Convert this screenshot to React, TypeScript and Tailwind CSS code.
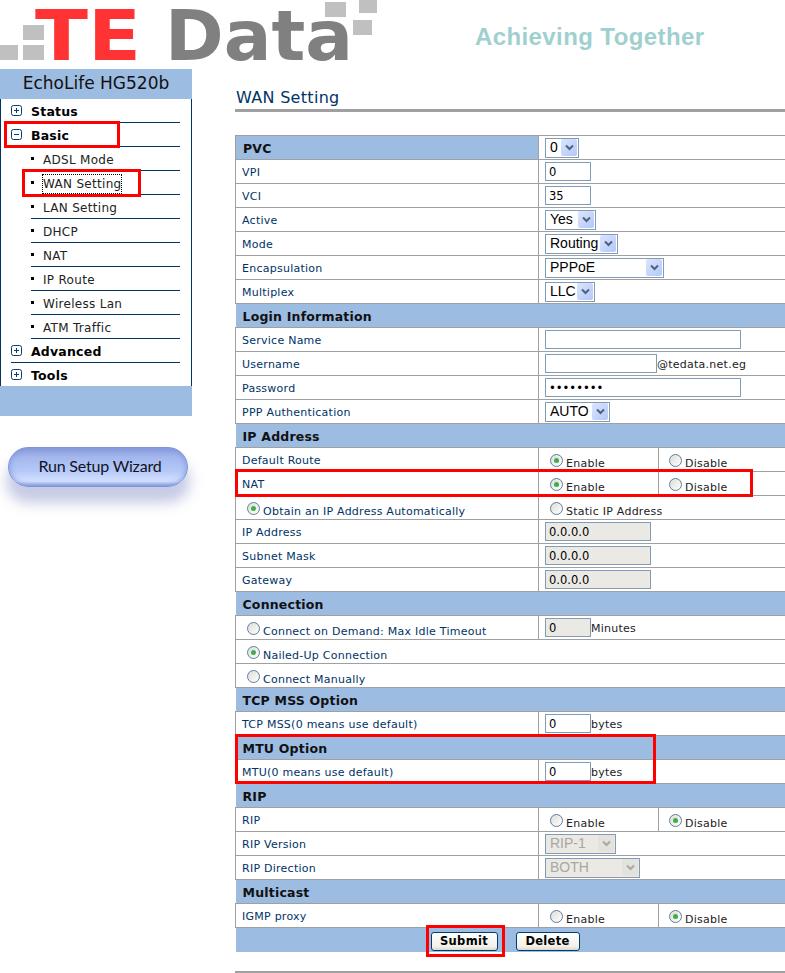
import type { ReactNode } from "react";

const SANS = "font-['DejaVu_Sans',Verdana,sans-serif]";
const ARIAL = "font-['Liberation_Sans',Arial,sans-serif]";

function TreeIcon({ open }: { open?: boolean }) {
  return (
    <svg width="11" height="11" viewBox="0 0 11 11" className="shrink-0">
      <rect x="0.5" y="0.5" width="10" height="10" rx="2" fill="#fff" stroke="#0b3a6e" />
      <path d="M3 5.5h5" stroke="#0b3a6e" />
      {!open && <path d="M5.5 3v5" stroke="#0b3a6e" />}
    </svg>
  );
}

function TopItem({ label, open, last }: { label: string; open?: boolean; last?: boolean }) {
  return (
    <div
      className={`flex items-center gap-[9px] text-[12.5px] font-bold tracking-[0.2px] text-black ${
        last ? "h-[23px]" : "h-6 border-b border-[#003366]"
      }`}
    >
      <TreeIcon open={open} />
      <span className="mt-1">{label}</span>
    </div>
  );
}

function SubItem({ label, focused }: { label: string; focused?: boolean }) {
  return (
    <div className="ml-5 flex h-6 items-center border-b border-[#003366] text-[12px] tracking-[0.3px] text-[#222]">
      <span className="mr-[9px] h-[3px] w-[3px] bg-black" />
      <span className={`mt-[2px] ${focused ? "outline-1 outline-dotted outline-black" : ""}`}>{label}</span>
    </div>
  );
}

function Sidebar() {
  return (
    <aside className={`w-[192px] shrink-0 ${SANS}`}>
      <div className="flex h-[30px] items-center justify-center bg-[#9dbce1] text-[17px] text-[#111]">
        EchoLife HG520b
      </div>
      <div className="border-x border-[#003366] pl-[10px] pr-[11px]">
        <TopItem label="Status" />
        <TopItem label="Basic" open />
        <SubItem label="ADSL Mode" />
        <SubItem label="WAN Setting" focused />
        <SubItem label="LAN Setting" />
        <SubItem label="DHCP" />
        <SubItem label="NAT" />
        <SubItem label="IP Route" />
        <SubItem label="Wireless Lan" />
        <SubItem label="ATM Traffic" />
        <TopItem label="Advanced" />
        <TopItem label="Tools" last />
      </div>
      <div className="h-[30px] bg-[#9dbce1]" />
      <div className="ml-2 mt-[31px] flex h-[40px] w-[180px] items-center justify-center rounded-full border border-[#8095d8] bg-[linear-gradient(#8a9ddb_0%,#a5b8ee_25%,#b4c8f8_60%,#d6e2ff_88%,#8ea4e6_100%)] pb-[2px] pl-[4px] font-['Lato',sans-serif] text-[16px] tracking-[-0.2px] text-[#10131f] shadow-[inset_0_0_6px_#7f95dd,0_14px_13px_2px_rgba(130,140,195,0.45)]">
        Run Setup Wizard
      </div>
    </aside>
  );
}

function Chevron({ disabled }: { disabled?: boolean }) {
  return (
    <span
      className={`flex h-[17px] w-4 shrink-0 items-center justify-center rounded-[2px] ${
        disabled ? "bg-[#e4e2dc]" : "bg-[linear-gradient(135deg,#dbe5fd,#b3c8f7)]"
      }`}
    >
      <svg width="9" height="7" viewBox="0 0 9 7">
        <path d="M1 1.5l3.5 3.5L8 1.5" fill="none" stroke={disabled ? "#aaa89f" : "#4d6185"} strokeWidth="2" />
      </svg>
    </span>
  );
}

function Dropdown({ value, className, disabled }: { value: string; className: string; disabled?: boolean }) {
  return (
    <div
      className={`flex h-5 items-center justify-between border border-[#7f9db9] pl-[4px] pr-[1px] ${ARIAL} text-[14px] tracking-normal ${
        disabled ? "bg-[#ebe9e4] text-[#a9a79f]" : "bg-white text-black"
      } ${className}`}
    >
      <span>{value}</span>
      <Chevron disabled={disabled} />
    </div>
  );
}

function Field({ value = "", className, disabled, type = "text" }: { value?: string; className: string; disabled?: boolean; type?: string }) {
  return (
    <input
      readOnly
      type={type}
      value={value}
      className={`block h-[19px] border border-[#7f9db9] px-[3px] ${SANS} text-[11.5px] tracking-normal text-black outline-none ${
        disabled ? "bg-[#ebe9e4]" : "bg-white"
      } ${className}`}
    />
  );
}

function Suffix({ children }: { children: ReactNode }) {
  return <span className="pt-1">{children}</span>;
}

function Radio({ checked, label }: { checked?: boolean; label: string }) {
  return (
    <span className="flex items-start gap-[3px]">
      <span className="-mt-[3px] flex h-[13px] w-[13px] shrink-0 items-center justify-center rounded-full border border-[#5f7f9f] bg-[linear-gradient(135deg,#dcdcd6,#ffffff)]">
        {checked && <span className="h-[5px] w-[5px] rounded-full bg-[#3fae49]" />}
      </span>
      <span className="leading-[14px]">{label}</span>
    </span>
  );
}

function SectionRow({ title, second }: { title: string; second?: ReactNode }) {
  if (second) {
    return (
      <tr className="h-6">
        <td className="border border-[#a0a0a0] bg-[#9dbce1] p-0 pl-[7px] pt-1 text-[12.5px] font-bold tracking-[0.2px] text-[#111]">{title}</td>
        <td colSpan={2} className="border border-[#a0a0a0] p-0 pl-[6px]">{second}</td>
      </tr>
    );
  }
  return (
    <tr className="h-6">
      <td colSpan={3} className="bg-[#9dbce1] p-0 pl-[7px] pt-1 text-[12.5px] font-bold tracking-[0.2px] text-[#111]">{title}</td>
    </tr>
  );
}

function FieldRow({ label, children }: { label: ReactNode; children?: ReactNode }) {
  return (
    <tr className="h-6">
      <td className="border border-[#a0a0a0] p-0 pl-[6px] pt-1 text-[#003366]">{label}</td>
      <td colSpan={2} className="border border-[#a0a0a0] p-0 pl-[6px]">
        <div className="flex items-center text-[#222]">{children}</div>
      </td>
    </tr>
  );
}

function RadioRow({ label, first }: { label: string; first: boolean }) {
  return (
    <tr className="h-6">
      <td className="border border-[#a0a0a0] p-0 pl-[6px] pt-1 text-[#003366]">{label}</td>
      <td className="border border-[#a0a0a0] p-0 pl-[11px] pt-2 text-[#222]"><Radio checked={first} label="Enable" /></td>
      <td className="border border-[#a0a0a0] p-0 pl-[10px] pt-2 text-[#222]"><Radio checked={!first} label="Disable" /></td>
    </tr>
  );
}

function WideRadioRow({ label, checked }: { label: string; checked?: boolean }) {
  return (
    <tr className="h-6">
      <td colSpan={3} className="border border-[#a0a0a0] p-0 pl-[11px] pt-2 text-[#003366]">
        <Radio checked={checked} label={label} />
      </td>
    </tr>
  );
}

function ActionButton({ children, className }: { children: ReactNode; className: string }) {
  return (
    <button
      type="button"
      className={`h-[19px] rounded-[3px] border border-[#003c74] bg-[linear-gradient(#ffffff,#f2f0e8_80%,#dcd8c8)] text-[11.5px] font-bold tracking-[0.3px] text-black ${className}`}
    >
      {children}
    </button>
  );
}

function SettingsTable() {
  return (
    <table className="w-[550px] table-fixed border-collapse text-[11px] tracking-[0.25px]">
      <colgroup>
        <col className="w-[303px]" />
        <col className="w-[120px]" />
        <col className="w-[127px]" />
      </colgroup>
      <tbody>
        <SectionRow title="PVC" second={<Dropdown value="0" className="w-[34px]" />} />
        <FieldRow label="VPI"><Field value="0" className="w-[46px]" /></FieldRow>
        <FieldRow label="VCI"><Field value="35" className="w-[46px]" /></FieldRow>
        <FieldRow label="Active"><Dropdown value="Yes" className="w-[51px]" /></FieldRow>
        <FieldRow label="Mode"><Dropdown value="Routing" className="w-[73px]" /></FieldRow>
        <FieldRow label="Encapsulation"><Dropdown value="PPPoE" className="w-[119px]" /></FieldRow>
        <FieldRow label="Multiplex"><Dropdown value="LLC" className="w-[50px]" /></FieldRow>
        <SectionRow title="Login Information" />
        <FieldRow label="Service Name"><Field className="w-[196px]" /></FieldRow>
        <FieldRow label="Username"><Field className="w-[112px]" /><Suffix>@tedata.net.eg</Suffix></FieldRow>
        <FieldRow label="Password"><Field type="password" value="12345678" className="w-[196px]" /></FieldRow>
        <FieldRow label="PPP Authentication"><Dropdown value="AUTO" className="w-[65px]" /></FieldRow>
        <SectionRow title="IP Address" />
        <RadioRow label="Default Route" first />
        <RadioRow label="NAT" first />
        <tr className="h-6">
          <td className="border border-[#a0a0a0] p-0 pl-[11px] pt-2 text-[#003366]">
            <Radio checked label="Obtain an IP Address Automatically" />
          </td>
          <td colSpan={2} className="border border-[#a0a0a0] p-0 pl-[11px] pt-2 text-[#222]">
            <Radio label="Static IP Address" />
          </td>
        </tr>
        <FieldRow label="IP Address"><Field disabled value="0.0.0.0" className="w-[106px]" /></FieldRow>
        <FieldRow label="Subnet Mask"><Field disabled value="0.0.0.0" className="w-[106px]" /></FieldRow>
        <FieldRow label="Gateway"><Field disabled value="0.0.0.0" className="w-[106px]" /></FieldRow>
        <SectionRow title="Connection" />
        <tr className="h-6">
          <td className="border border-[#a0a0a0] p-0 pl-[11px] pt-2 text-[#003366]">
            <Radio label="Connect on Demand: Max Idle Timeout" />
          </td>
          <td colSpan={2} className="border border-[#a0a0a0] p-0 pl-[6px]">
            <div className="flex items-center text-[#222]">
              <Field disabled value="0" className="w-[46px]" />
              <Suffix>Minutes</Suffix>
            </div>
          </td>
        </tr>
        <WideRadioRow label="Nailed-Up Connection" checked />
        <WideRadioRow label="Connect Manually" />
        <SectionRow title="TCP MSS Option" />
        <FieldRow label="TCP MSS(0 means use default)"><Field value="0" className="w-[46px]" /><Suffix>bytes</Suffix></FieldRow>
        <SectionRow title="MTU Option" />
        <FieldRow label="MTU(0 means use default)"><Field value="0" className="w-[46px]" /><Suffix>bytes</Suffix></FieldRow>
        <SectionRow title="RIP" />
        <RadioRow label="RIP" first={false} />
        <FieldRow label="RIP Version"><Dropdown disabled value="RIP-1" className="w-[71px]" /></FieldRow>
        <FieldRow label="RIP Direction"><Dropdown disabled value="BOTH" className="w-[95px]" /></FieldRow>
        <SectionRow title="Multicast" />
        <RadioRow label="IGMP proxy" first={false} />
        <tr className="h-6">
          <td colSpan={3} className="bg-[#9dbce1] p-0 pt-[4px] align-top">
            <div className="flex items-center gap-[18px] pl-[195px]">
              <ActionButton className="w-[67px]">Submit</ActionButton>
              <ActionButton className="w-[64px]">Delete</ActionButton>
            </div>
          </td>
        </tr>
      </tbody>
    </table>
  );
}

export default function App() {
  return (
    <div className={`relative h-[973px] w-[785px] overflow-hidden bg-white ${SANS}`}>
      <header className="flex h-[69px]">
        <svg width="400" height="69" viewBox="0 0 400 69" className="shrink-0">
          <g fill="#c0c0c0">
            <rect x="0" y="45" width="18" height="15" />
            <rect x="23" y="45" width="21" height="15" />
            <rect x="23" y="25" width="21" height="15" />
            <rect x="325" y="2" width="21" height="15" />
            <rect x="359" y="0" width="18" height="13" />
            <rect x="353" y="20" width="19" height="15" />
          </g>
          <text x="35" y="60" fontFamily="DejaVu Sans" fontWeight="700" fontSize="68.6" fill="#ff3333" textLength="106" lengthAdjust="spacingAndGlyphs">
            TE
          </text>
          <text x="165" y="60" fontFamily="DejaVu Sans" fontWeight="700" fontSize="68.6" fill="#808080" textLength="188" lengthAdjust="spacingAndGlyphs">
            Data
          </text>
        </svg>
        <div className={`ml-[75px] mt-[23px] text-[24px] font-bold leading-[28px] tracking-[0.4px] text-[#9fd0d0] ${ARIAL}`}>
          Achieving Together
        </div>
      </header>

      <div className="flex items-start">
        <Sidebar />
        <main className="ml-[43px] w-[550px] shrink-0">
          <h1 className="flex h-[43px] items-center border-b-[3px] border-[#a0a0a0] pl-px pt-[18px] text-[16px] font-normal tracking-[0.3px] text-[#003366]">
            WAN Setting
          </h1>
          <div className="mt-[23px]">
            <SettingsTable />
          </div>
          <div className="mt-[19px] h-[3px] bg-[#a0a0a0]" />
        </main>
      </div>

      {/* red annotation boxes drawn on top of the screenshot */}
      <div className="absolute left-[4px] top-[121px] h-[27px] w-[116px] border-[3px] border-[#ff0000]" />
      <div className="absolute left-[22px] top-[169px] h-[28px] w-[119px] border-[3px] border-[#ff0000]" />
      <div className="absolute left-[235px] top-[469px] h-[28px] w-[518px] border-[3px] border-[#ff0000]" />
      <div className="absolute left-[235px] top-[734px] h-[50px] w-[421px] border-[3px] border-[#ff0000]" />
      <div className="absolute left-[426px] top-[925px] h-[32px] w-[79px] border-[3px] border-[#ff0000]" />
    </div>
  );
}
